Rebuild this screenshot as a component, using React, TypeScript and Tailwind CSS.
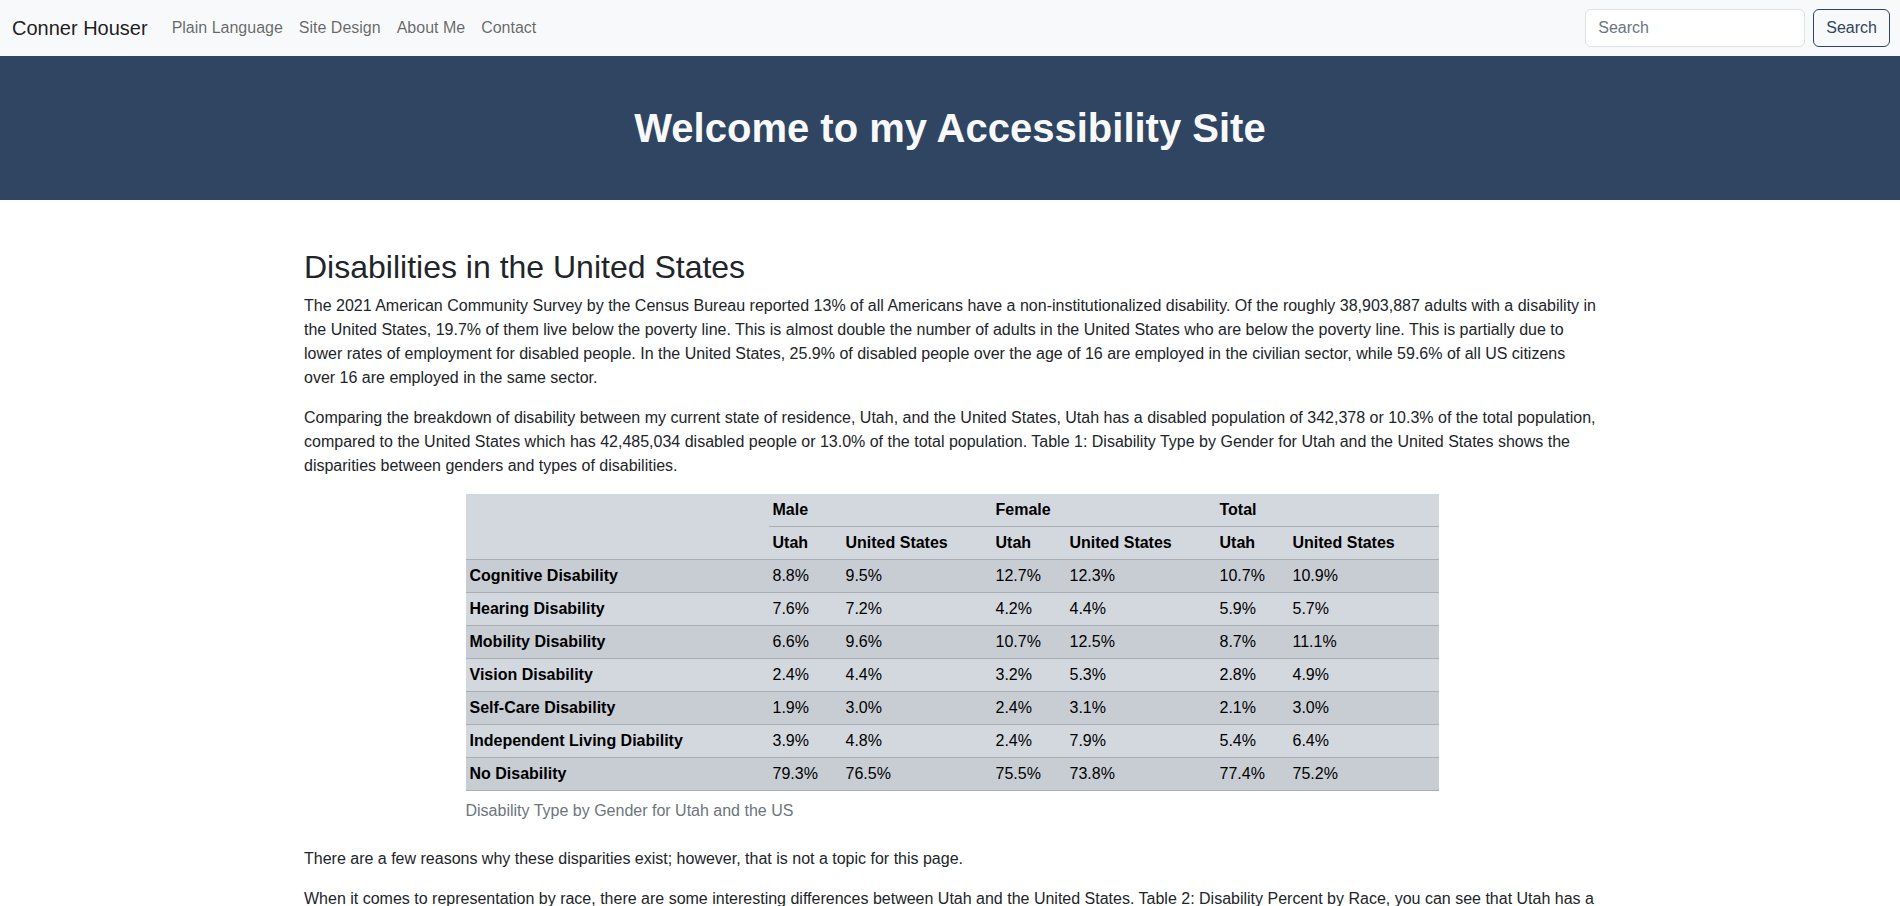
const font = { fontFamily: '"Liberation Sans", Arial, sans-serif' };

type Row = { label: string; values: string[] };

const rows: Row[] = [
  { label: 'Cognitive Disability', values: ['8.8%', '9.5%', '12.7%', '12.3%', '10.7%', '10.9%'] },
  { label: 'Hearing Disability', values: ['7.6%', '7.2%', '4.2%', '4.4%', '5.9%', '5.7%'] },
  { label: 'Mobility Disability', values: ['6.6%', '9.6%', '10.7%', '12.5%', '8.7%', '11.1%'] },
  { label: 'Vision Disability', values: ['2.4%', '4.4%', '3.2%', '5.3%', '2.8%', '4.9%'] },
  { label: 'Self-Care Disability', values: ['1.9%', '3.0%', '2.4%', '3.1%', '2.1%', '3.0%'] },
  { label: 'Independent Living Diability', values: ['3.9%', '4.8%', '2.4%', '7.9%', '5.4%', '6.4%'] },
  { label: 'No Disability', values: ['79.3%', '76.5%', '75.5%', '73.8%', '77.4%', '75.2%'] },
];

const colWidths = ['w-[73px]', 'w-[150px]', 'w-[74px]', 'w-[150px]', 'w-[73px]', 'w-[150px]'];

function Navbar() {
  return (
    <nav className="bg-[#f8f9fa] h-[56px] flex items-center justify-between pl-3 pr-[10px]">
      <div className="flex items-center">
        <a className="text-[20px] text-black/90 mr-4 leading-[30px]">Conner Houser</a>
        <ul className="flex items-center text-[16px] text-black/60">
          <li className="px-2">Plain Language</li>
          <li className="px-2">Site Design</li>
          <li className="px-2">About Me</li>
          <li className="px-2">Contact</li>
        </ul>
      </div>
      <form className="flex items-center" onSubmit={(e) => e.preventDefault()}>
        <input
          type="search"
          placeholder="Search"
          className="w-[220px] h-[38px] mr-2 px-3 bg-white border border-[#dee2e6] rounded-md text-[16px] text-[#212529] placeholder:text-[#6c757d] outline-none"
        />
        <button
          type="submit"
          className="h-[38px] px-3 border border-[#2f4561] text-[#2f4561] rounded-md text-[16px]"
        >
          Search
        </button>
      </form>
    </nav>
  );
}

function DisabilityTable() {
  return (
    <div className="mb-4">
      <table className="w-[973px] mx-auto border-collapse text-black text-[16px] leading-6 text-left">
        <thead className="bg-[#d3d8df]">
          <tr className="border-b border-[#a9aeb5]">
            <th rowSpan={2} className="w-[303px] px-1 py-1 font-bold"></th>
            <th colSpan={2} className="px-1 py-1 font-bold">Male</th>
            <th colSpan={2} className="px-1 py-1 font-bold">Female</th>
            <th colSpan={2} className="px-1 py-1 font-bold">Total</th>
          </tr>
          <tr className="border-b border-[#a9aeb5]">
            {['Utah', 'United States', 'Utah', 'United States', 'Utah', 'United States'].map((h, i) => (
              <th key={i} className={`${colWidths[i]} px-1 py-1 font-bold`}>
                {h}
              </th>
            ))}
          </tr>
        </thead>
        <tbody>
          {rows.map((r, i) => (
            <tr
              key={r.label}
              className={`border-b border-[#a9aeb5] ${i % 2 === 0 ? 'bg-[#c8cdd4]' : 'bg-[#d3d8df]'}`}
            >
              <th className="px-1 py-1 font-bold">{r.label}</th>
              {r.values.map((v, j) => (
                <td key={j} className="px-1 py-1">
                  {v}
                </td>
              ))}
            </tr>
          ))}
        </tbody>
      </table>
      <div className="w-[973px] mx-auto py-2 text-[#6c757d] text-[16px] leading-6">
        Disability Type by Gender for Utah and the US
      </div>
    </div>
  );
}

export default function App() {
  return (
    <div className="min-h-screen bg-white text-[#212529]" style={font}>
      <Navbar />
      <header className="bg-[#2f4561] py-12 text-center">
        <h1 className="text-[40px] leading-[48px] font-bold text-[#f8f9fa]">
          Welcome to my Accessibility Site
        </h1>
      </header>
      <main className="max-w-[1320px] mx-auto pl-[14px] pr-[10px] mt-12 text-[16px] leading-6">
        <h2 className="text-[32px] leading-[38.4px] font-normal mb-2">Disabilities in the United States</h2>
        <p className="mb-4">
          The 2021 American Community Survey by the Census Bureau reported 13% of all Americans have a
          non-institutionalized disability. Of the roughly 38,903,887 adults with a disability in the United States,
          19.7% of them live below the poverty line. This is almost double the number of adults in the United States
          who are below the poverty line. This is partially due to lower rates of employment for disabled people. In
          the United States, 25.9% of disabled people over the age of 16 are employed in the civilian sector, while
          59.6% of all US citizens over 16 are employed in the same sector.
        </p>
        <p className="mb-4">
          Comparing the breakdown of disability between my current state of residence, Utah, and the United States,
          Utah has a disabled population of 342,378 or 10.3% of the total population, compared to the United States
          which has 42,485,034 disabled people or 13.0% of the total population. Table 1: Disability Type by Gender
          for Utah and the United States shows the disparities between genders and types of disabilities.
        </p>
        <DisabilityTable />
        <p className="mb-4">
          There are a few reasons why these disparities exist; however, that is not a topic for this page.
        </p>
        <p className="mb-4">
          When it comes to representation by race, there are some interesting differences between Utah and the United
          States. Table 2: Disability Percent by Race, you can see that Utah has a lower rate of disability across
          most racial groups than the United States as a whole.
        </p>
      </main>
    </div>
  );
}
